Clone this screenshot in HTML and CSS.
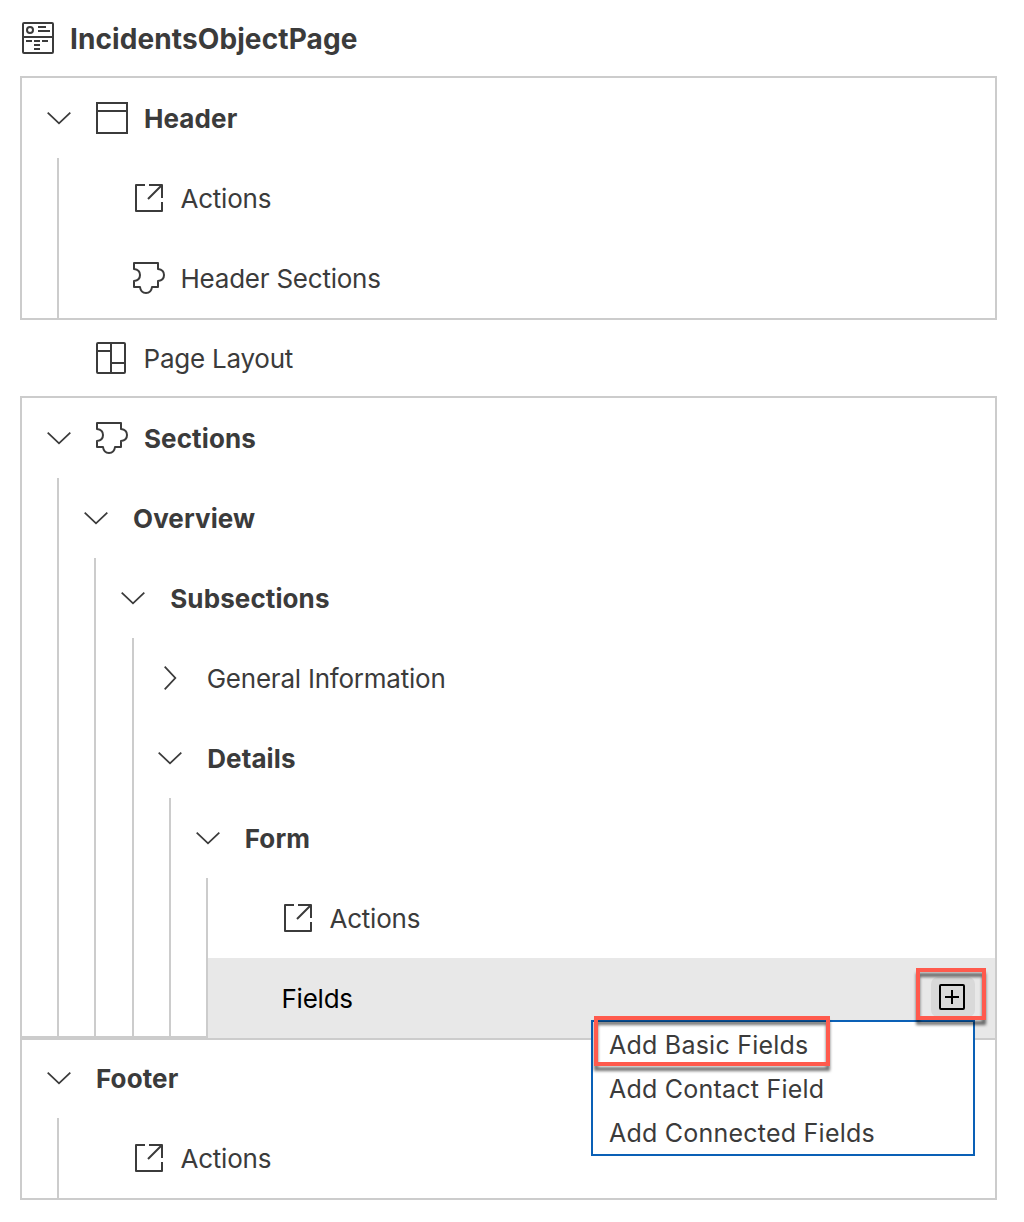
FILE: index.html
```html
<!DOCTYPE html>
<html lang="en">
<head>
<meta charset="utf-8">
<title>IncidentsObjectPage</title>
<link rel="stylesheet" href="styles.css">
</head>
<body>
<svg class="sprite" aria-hidden="true">
  <symbol id="down" viewBox="0 0 24 24"><path stroke-width="1.8" d="M.7 6.7 12 17.3 23.3 6.7"/></symbol>
  <symbol id="right" viewBox="0 0 24 24"><path stroke-width="1.8" d="M6.7.7 17.3 12 6.7 23.3"/></symbol>
  <symbol id="page" viewBox="0 0 32 32"><rect x="1" y="1" width="30" height="30" rx="1"/><circle cx="8" cy="8" r="3"/><path d="M1 15H31M16 5H24M16 9H28M4 19H10M12 19H18M20 19H26M12 23H18M12 27H18"/></symbol>
  <symbol id="header" viewBox="0 0 32 32"><path d="M1 1H31V31H1ZM1 9H31"/></symbol>
  <symbol id="action" viewBox="0 0 32 32"><path stroke-linejoin="round" d="M12 3H3V29H29V20M16 3H29V16M28.5 3.5 15 17"/></symbol>
  <symbol id="puzzle" viewBox="0 0 32 32"><path stroke-linejoin="round" d="M1 1H25V7C29 7.500 31 10 31 13S29 18.500 25 19V25H19C18.500 29 16 31 13 31S7.500 29 7 25H1V19C5 18.500 7 16 7 13S5 7.500 1 7Z"/></symbol>
  <symbol id="layout" viewBox="0 0 32 32"><rect x="1" y="1" width="28" height="30" rx="1"/><path d="M15 1V31M1 9H15M15 21H29"/></symbol>
  <symbol id="plus" viewBox="0 0 26 26"><rect x="1" y="1" width="24" height="24" rx="1"/><path d="M13 6V20M6 13H20"/></symbol>
</svg>
<main class="outline">
  <header class="title"><svg class="icon"><use href="#page"/></svg><h1 class="label bold name">IncidentsObjectPage</h1></header>

  <section class="box">
    <div class="row"><svg class="arrow"><use href="#down"/></svg><svg class="icon"><use href="#header"/></svg><span class="label bold">Header</span></div>
    <div class="group">
      <div class="row"><span class="arrow"></span><svg class="icon"><use href="#action"/></svg><span class="label">Actions</span></div>
      <div class="row"><span class="arrow"></span><svg class="icon"><use href="#puzzle"/></svg><span class="label">Header Sections</span></div>
    </div>
  </section>

  <div class="row between"><span class="arrow"></span><svg class="icon"><use href="#layout"/></svg><span class="label">Page Layout</span></div>

  <section class="box sections">
    <div class="row"><svg class="arrow"><use href="#down"/></svg><svg class="icon"><use href="#puzzle"/></svg><span class="label bold">Sections</span></div>
    <div class="group">
      <div class="row"><svg class="arrow"><use href="#down"/></svg><span class="label bold">Overview</span></div>
      <div class="group">
        <div class="row"><svg class="arrow"><use href="#down"/></svg><span class="label bold">Subsections</span></div>
        <div class="group subsections">
          <div class="row"><svg class="arrow"><use href="#right"/></svg><span class="label">General Information</span></div>
          <div class="row"><svg class="arrow"><use href="#down"/></svg><span class="label bold">Details</span></div>
          <div class="group">
            <div class="row"><svg class="arrow"><use href="#down"/></svg><span class="label bold">Form</span></div>
            <div class="group deepest">
              <div class="row"><span class="arrow"></span><svg class="icon"><use href="#action"/></svg><span class="label">Actions</span></div>
              <div class="row selected"><span class="arrow"></span><span class="label">Fields</span>
                <button class="add" aria-label="Add"><svg class="plus"><use href="#plus"/></svg></button>
                <div class="menu">
                  <div class="item">Add Basic Fields</div>
                  <div class="item">Add Contact Field</div>
                  <div class="item">Add Connected Fields</div>
                </div>
                <span class="mark mark-add"></span>
                <span class="mark mark-item"></span>
              </div>
            </div>
          </div>
        </div>
      </div>
    </div>
  </section>

  <section class="box footer">
    <div class="row"><svg class="arrow"><use href="#down"/></svg><span class="label bold">Footer</span></div>
    <div class="group">
      <div class="row"><span class="arrow"></span><svg class="icon"><use href="#action"/></svg><span class="label">Actions</span></div>
    </div>
  </section>
</main>
</body>
</html>
```
FILE: styles.css
```css
* { box-sizing: border-box; }

body {
  margin: 0;
  background: #fff;
  color: #3b3b3b;
  font: 26px/32px Inter, "Liberation Sans", sans-serif;
}

.sprite { position: absolute; width: 0; height: 0; }

svg {
  fill: none;
  stroke: currentColor;
  stroke-width: 2;
}

.outline { width: 1024px; padding: 0 27px 22px 20px; }

.title {
  display: flex;
  align-items: center;
  gap: 16px;
  height: 76px;
  padding-left: 2px;
}

.box { border: 2px solid #ccc; }

.row {
  display: flex;
  align-items: center;
  height: 80px;
  padding-left: 25px;
}

.arrow { flex: none; width: 24px; height: 24px; margin-right: 25px; }
.icon { flex: none; width: 32px; height: 32px; }
.row .icon { margin-right: 16px; }

.label {
  margin: 0 0 0 -0.5px;
  padding-top: 1px;
  font-size: 26px;
  font-weight: 400;
  letter-spacing: -0.23px;
  white-space: nowrap;
}
.bold { margin-left: 0; font-weight: 700; letter-spacing: 0.1px; }
.name { padding-top: 2px; font-size: 28px; letter-spacing: 0.1px; }

.group { margin-left: 35.25px; border-left: 2px solid #ccc; }
.box > .group { margin-left: 35px; }
.subsections > .row { padding-left: 24.7px; }

.between { height: 76px; padding-left: 27px; }

/* The selected row covers the bottom border of its box. */
.sections { height: 642px; }
.sections > .group { height: 558px; }
.deepest { height: 160px; }

.selected {
  position: relative;
  background: #e8e8e8;
  color: #000;
}

.footer > .row { height: 78px; padding-bottom: 2px; }

.add {
  display: flex;
  align-items: center;
  justify-content: center;
  width: 44px;
  height: 40px;
  margin: 0 20px 2px auto;
  padding: 0 2px 0 0;
  border: 0;
  border-radius: 7px;
  background: #d9d9d9;
  color: #000;
}
.plus { width: 26px; height: 26px; }

.menu {
  position: absolute;
  top: 62px;
  right: 20px;
  width: 384px;
  border: 2px solid #0a60b6;
  background: #fff;
  color: #3b3b3b;
}
.item {
  height: 44px;
  padding: 1px 0 0 16px;
  font-size: 25px;
  line-height: 44px;
  letter-spacing: 0.23px;
}

.mark {
  position: absolute;
  border: 4px solid #ff5a4d;
  filter: drop-shadow(0 5px 1.5px rgba(0, 0, 0, .55));
}
.mark-add { top: 10px; right: 9px; width: 70px; height: 52px; }
.mark-item { top: 58px; right: 165px; width: 236px; height: 50px; }
```
